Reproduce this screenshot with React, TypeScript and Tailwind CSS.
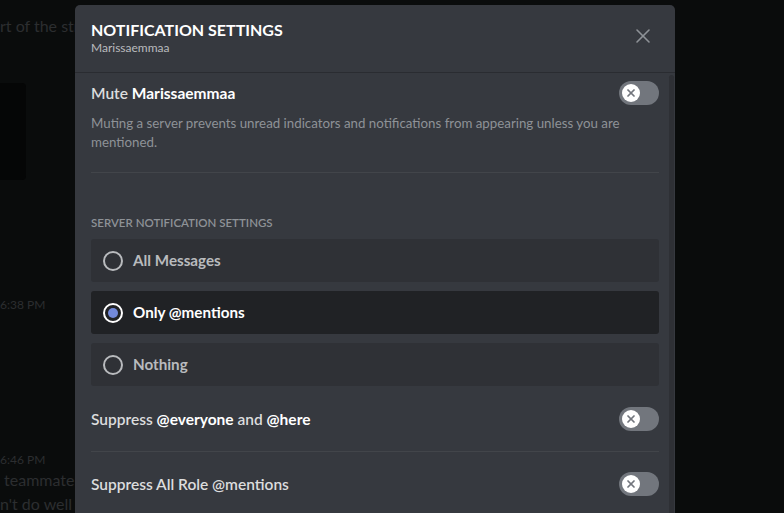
import { X } from "lucide-react";

const font = { fontFamily: 'Lato, "Open Sans", sans-serif' };

function Toggle() {
  return (
    <div className="flex h-6 w-10 shrink-0 items-center rounded-full bg-[#72767d] px-[3px]">
      <div className="flex h-[18px] w-[18px] items-center justify-center rounded-full bg-white">
        <X size={12} strokeWidth={3.5} className="text-[#72767d]" />
      </div>
    </div>
  );
}

function Radio({ label, selected }: { label: string; selected?: boolean }) {
  return (
    <div
      className={`flex h-[43px] items-center gap-[10px] rounded-[3px] px-3 ${
        selected ? "bg-[#202225]" : "bg-[#2f3136]"
      }`}
    >
      {selected ? (
        <div className="flex h-5 w-5 items-center justify-center rounded-full border-2 border-white">
          <div className="h-[10px] w-[10px] rounded-full bg-[#7289da]" />
        </div>
      ) : (
        <div className="h-5 w-5 rounded-full border-2 border-[#b9bbbe]" />
      )}
      <span className={`text-[15.2px] font-bold ${selected ? "text-white" : "text-[#b9bbbe]"}`}>{label}</span>
    </div>
  );
}

export default function App() {
  return (
    <div className="relative h-[513px] w-[784px] overflow-hidden bg-[#0a0c0c]" style={font}>
      {/* dimmed chat behind */}
      <div className="flex flex-col text-[16px] text-[#2c2e30]">
        <div className="mt-[16px] leading-[20px]">rt of the stre</div>
        <div className="mt-[47px] h-[97px] w-[26px] rounded-r bg-[#050606]" />
        <div className="mt-[117px] text-[12px] leading-[16px]">6:38 PM</div>
        <div className="mt-[139px] text-[12px] leading-[16px]">6:46 PM</div>
        <div className="mt-[2px] leading-[20px]">&nbsp;teammates</div>
        <div className="mt-[5px] leading-[18px]">n't do well w</div>
      </div>

      {/* modal */}
      <div className="absolute left-[75px] top-[5px] h-[540px] w-[600px] overflow-hidden rounded-t-[5px] bg-[#36393f]">
        <div className="flex h-[68px] items-start justify-between border-b border-[#2a2c31] pl-4 pr-5 pt-[14px]">
          <div>
            <div className="text-[16px] font-bold leading-[22px] text-white">NOTIFICATION SETTINGS</div>
            <div className="text-[12px] leading-[14px] text-[#b9bbbe]">Marissaemmaa</div>
          </div>
          <X size={24} strokeWidth={1.6} className="mt-[5px] text-[#8e9297]" />
        </div>

        <div className="flex">
          <div className="flex-1 pl-4 pr-[10px]">
            <div className="mt-[8px] flex items-center justify-between">
              <div className="pt-px text-[15.5px] font-semibold text-[#dcddde]">
                Mute <span className="font-bold text-white">Marissaemmaa</span>
              </div>
              <Toggle />
            </div>
            <p className="mt-[9px] text-[13.3px] leading-[19px] text-[#8e9297]">
              Muting a server prevents unread indicators and notifications from appearing unless you are mentioned.
            </p>
            <div className="mt-[20px] border-t border-[#42454a]" />

            <div className="mt-[43px] text-[11.5px] font-semibold uppercase leading-[14px] text-[#8e9297]">
              Server Notification Settings
            </div>
            <div className="mt-[9px] flex flex-col gap-[9px]">
              <Radio label="All Messages" />
              <Radio label="Only @mentions" selected />
              <Radio label="Nothing" />
            </div>

            <div className="mt-[21px] flex items-center justify-between">
              <div className="pt-px text-[15.5px] font-semibold text-[#dcddde]">
                Suppress <span className="font-bold text-white">@everyone</span> and{" "}
                <span className="font-bold text-white">@here</span>
              </div>
              <Toggle />
            </div>
            <div className="mt-[19px] border-t border-[#42454a]" />
            <div className="mt-[20px] flex items-center justify-between">
              <div className="pt-px text-[15.5px] font-semibold text-[#dcddde]">Suppress All Role @mentions</div>
              <Toggle />
            </div>
          </div>
          <div className="mt-[2px] h-[460px] w-[5px] rounded-sm bg-[#2e3035]" />
          <div className="w-px" />
        </div>
      </div>
    </div>
  );
}
